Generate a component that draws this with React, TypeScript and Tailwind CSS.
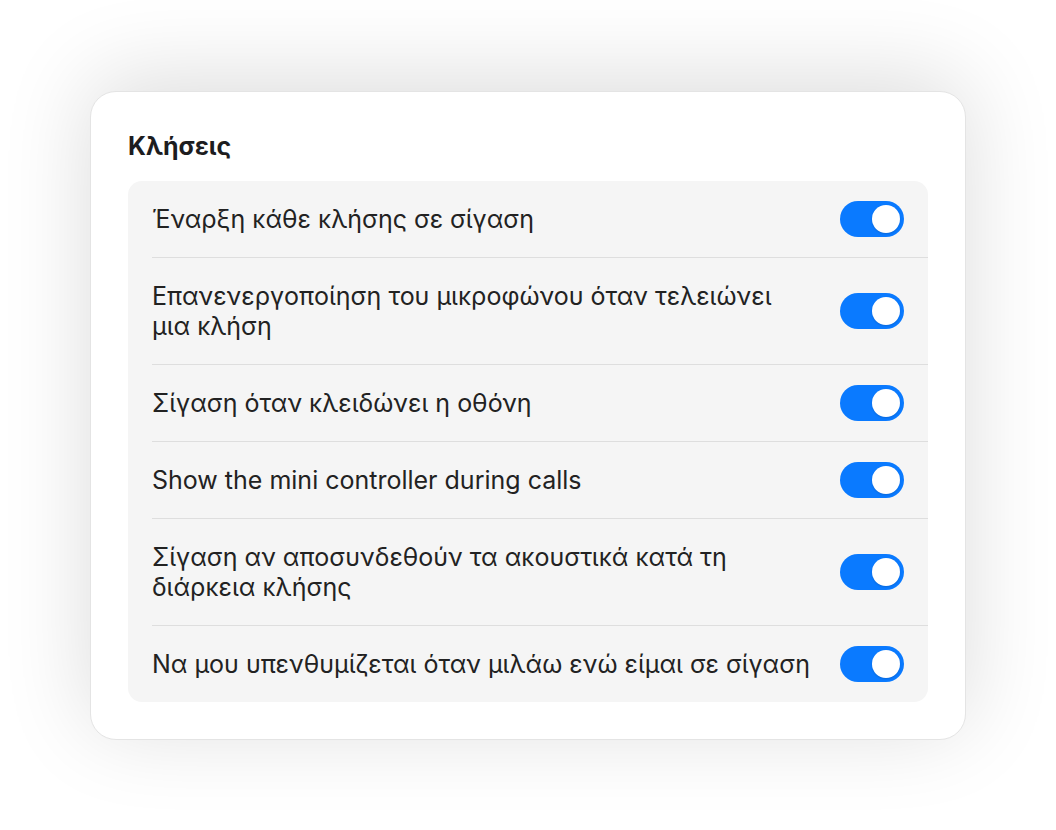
import React, { useState } from "react"

const items = [
  "Έναρξη κάθε κλήσης σε σίγαση",
  "Επανενεργοποίηση του μικροφώνου όταν τελειώνει μια κλήση",
  "Σίγαση όταν κλειδώνει η οθόνη",
  "Show the mini controller during calls",
  "Σίγαση αν αποσυνδεθούν τα ακουστικά κατά τη διάρκεια κλήσης",
  "Να μου υπενθυμίζεται όταν μιλάω ενώ είμαι σε σίγαση",
]

/**
 * Toggle
 * Blue pill switch with a white knob
 */
function Toggle({ on, onChange }: { on: boolean; onChange: () => void }) {
  return (
    <button
      type="button"
      onClick={onChange}
      className={`relative -my-[3px] h-[36px] w-[64px] shrink-0 rounded-full transition-colors ${
        on ? "bg-[#0a7aff]" : "bg-[#d9d9dc]"
      }`}
    >
      <span
        className={`absolute top-[4px] h-[28px] w-[28px] rounded-full bg-white shadow-[0_1px_2px_rgba(0,0,0,0.15)] transition-all ${
          on ? "left-[32px]" : "left-[4px]"
        }`}
      />
    </button>
  )
}

export default function App() {
  const [values, setValues] = useState(items.map(() => true))

  return (
    <div
      className="flex h-[830px] w-full items-center justify-center bg-white"
      style={{ fontFamily: "Inter, 'Noto Sans', sans-serif" }}
    >
      <div className="w-[876px] rounded-[26px] border border-[#e4e4e4] bg-white px-[37px] pb-[37px] pt-[39px] shadow-[0_-12px_90px_rgba(0,0,0,0.14)]">
        {/* Section title */}
        <h2 className="mb-[20px] text-[25px] font-bold leading-[30px] text-[#1d1d1f]">
          Κλήσεις
        </h2>

        {/* Settings group */}
        <div className="overflow-hidden rounded-[14px] bg-[#f5f5f5]">
          {items.map((label, i) => (
            <div key={label} className="pl-6">
              <div
                className={`flex items-center justify-between gap-6 py-[23px] pr-6 ${
                  i < items.length - 1 ? "border-b border-[#dedede]" : ""
                }`}
              >
                <span className="max-w-[662px] flex-1 text-[25px] leading-[30px] text-[#222222]">
                  {label}
                </span>
                <Toggle
                  on={values[i]}
                  onChange={() =>
                    setValues((v) => v.map((x, j) => (j === i ? !x : x)))
                  }
                />
              </div>
            </div>
          ))}
        </div>
      </div>
    </div>
  )
}
